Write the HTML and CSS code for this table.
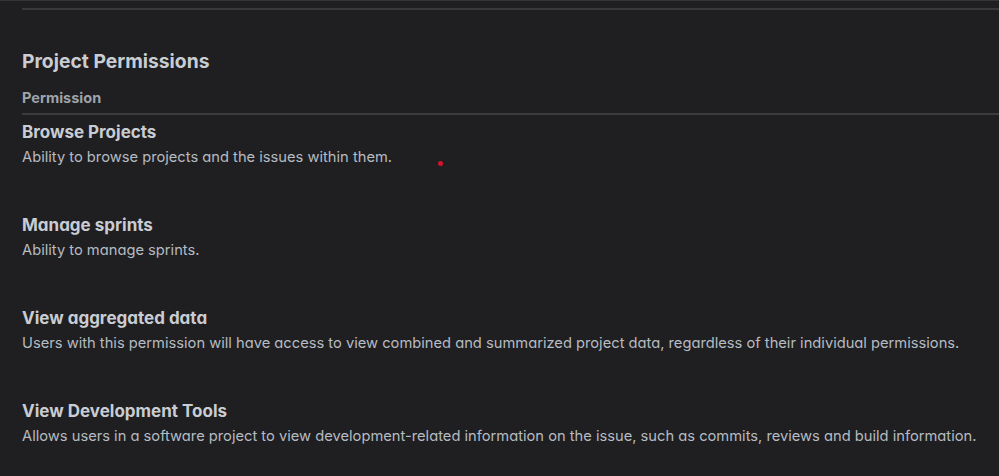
FILE: index.html
```html
<!DOCTYPE html>
<html>
<head>
<meta charset="utf-8">
<link rel="stylesheet" href="styles.css">
</head>
<body>
<div class="topbar"></div>
<main class="page">
  <div class="rule-top"></div>
  <h2 class="title">Project Permissions</h2>
  <div class="colhead">Permission</div>
  <ul class="perms">
    <li class="perm">
      <div class="name">Browse Projects</div>
      <div class="desc">Ability to browse projects and the issues within them.</div>
      <span class="dot"></span>
    </li>
    <li class="perm">
      <div class="name">Manage sprints</div>
      <div class="desc">Ability to manage sprints.</div>
    </li>
    <li class="perm">
      <div class="name">View aggregated data</div>
      <div class="desc">Users with this permission will have access to view combined and summarized project data, regardless of their individual permissions.</div>
    </li>
    <li class="perm">
      <div class="name">View Development Tools</div>
      <div class="desc">Allows users in a software project to view development-related information on the issue, such as commits, reviews and build information.</div>
    </li>
  </ul>
</main>
</body>
</html>
```
FILE: styles.css
```css
html, body {
  margin: 0;
  padding: 0;
  background: #1f1f21;
}
body {
  font-family: Inter, "Noto Sans", sans-serif;
  font-feature-settings: "cv11" 1;
  color: #c7cbd1;
  overflow: hidden;
  height: 476px;
}
.topbar {
  height: 1px;
  background: #353538;
}
.page {
  padding-left: 22px;
}
.rule-top {
  margin-top: 7px;
  height: 2px;
  background: #38393c;
}
.title {
  margin: 39px 0 0;
  font-size: 19.3px;
  line-height: 24px;
  font-weight: 700;
  color: #c9cdd3;
}
.colhead {
  margin-top: 16px;
  font-size: 14.5px;
  line-height: 18px;
  font-weight: 700;
  color: #9ea4ab;
  padding-bottom: 6px;
  border-bottom: 2px solid #3a3b3e;
}
.perms {
  list-style: none;
  margin: 0;
  padding: 0;
}
.perm {
  position: relative;
  height: 93px;
  padding-top: 7px;
  box-sizing: border-box;
}
.name {
  font-size: 17px;
  line-height: 20px;
  font-weight: 700;
  color: #c9cdd3;
}
.desc {
  margin-top: 5px;
  font-size: 14.7px;
  line-height: 20px;
  color: #b6bbc2;
}
.dot {
  position: absolute;
  left: 416px;
  top: 46px;
  width: 5px;
  height: 5px;
  border-radius: 50%;
  background: #d3142c;
}
```
